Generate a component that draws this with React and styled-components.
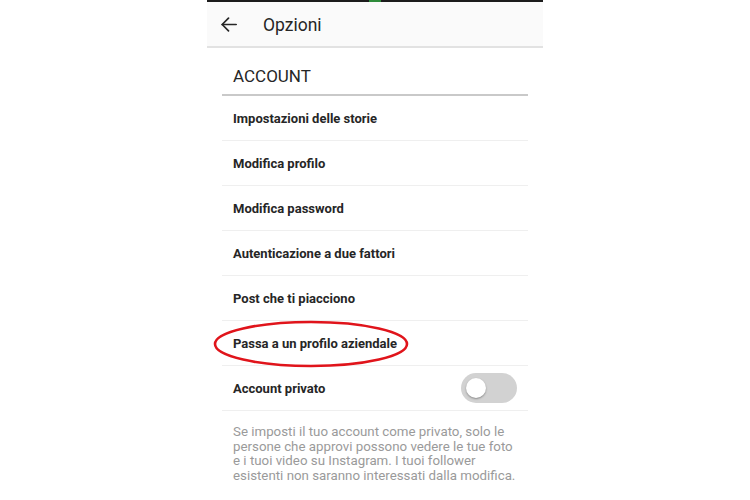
import React, { useState } from 'react';
import styled, { createGlobalStyle } from 'styled-components';

const GlobalStyle = createGlobalStyle`
  html, body {
    margin: 0;
    padding: 0;
    background: #ffffff;
    font-family: Roboto, "Noto Sans", "Liberation Sans", sans-serif;
  }
`;

const Page = styled.div`
  width: 750px;
  height: 500px;
  display: flex;
  justify-content: center;
  overflow: hidden;
  background: #ffffff;
`;

const Screen = styled.div`
  position: relative;
  width: 336px;
  display: flex;
  flex-direction: column;
  background: #ffffff;
`;

const StatusStrip = styled.div`
  height: 2px;
  background: #1c1c1c;
  display: flex;
  justify-content: center;
`;

const StatusMark = styled.div`
  width: 12px;
  height: 2px;
  background: #2e8b3a;
`;

const TopBar = styled.div`
  height: 44px;
  display: flex;
  align-items: center;
  padding: 0 14px;
  background: #fafafa;
  border-bottom: 2px solid #e2e2e2;
`;

const BackButton = styled.button`
  width: 16px;
  height: 24px;
  padding: 0;
  border: none;
  background: none;
  display: flex;
  align-items: center;
  justify-content: center;
  cursor: pointer;
`;

const Title = styled.div`
  font-size: 17.5px;
  color: #262626;
  margin-left: 26px;
  padding-top: 1px;
`;

const Content = styled.div`
  padding: 0 15px;
  display: flex;
  flex-direction: column;
`;

const SectionTitle = styled.div`
  height: 36px;
  display: flex;
  align-items: center;
  padding: 10px 11px 0;
  font-size: 17px;
  color: #262626;
  border-bottom: 2px solid #c9c9c9;
`;

const Row = styled.div`
  height: 44px;
  display: flex;
  align-items: center;
  justify-content: space-between;
  padding: 0 11px;
  border-bottom: 1px solid #efefef;
  font-size: 13px;
  font-weight: 700;
  color: #262626;
`;

const Switch = styled.button`
  width: 56px;
  height: 30px;
  padding: 0 5px;
  border: none;
  border-radius: 15px;
  background: ${p => (p.on ? '#3897f0' : '#d2d2d2')};
  display: flex;
  align-items: center;
  justify-content: ${p => (p.on ? 'flex-end' : 'flex-start')};
  cursor: pointer;
`;

const Knob = styled.span`
  width: 20px;
  height: 20px;
  border-radius: 50%;
  background: #ffffff;
  box-shadow: 0 1px 2px rgba(0, 0, 0, 0.35);
`;

const Note = styled.p`
  margin: 0;
  padding: 14px 0 0 11px;
  font-size: 13.3px;
  line-height: 14.6px;
  color: #9a9a9a;
  white-space: nowrap;
`;

const Highlight = styled.svg`
  position: absolute;
  left: 4px;
  top: 320px;
  pointer-events: none;
`;

const items = [
  'Impostazioni delle storie',
  'Modifica profilo',
  'Modifica password',
  'Autenticazione a due fattori',
  'Post che ti piacciono',
  'Passa a un profilo aziendale',
];

const App = () => {
  const [privateAccount, setPrivateAccount] = useState(false);

  return (
    <Page>
      <GlobalStyle />
      <Screen>
        <StatusStrip>
          <StatusMark />
        </StatusStrip>
        <TopBar>
          <BackButton aria-label="Indietro">
            <svg width="16" height="15" viewBox="0 0 16 15" fill="none" stroke="#262626" strokeWidth="1.7" strokeLinecap="round" strokeLinejoin="round">
              <path d="M15.2 7.5H1.2" />
              <path d="M7.5 1.2L1.2 7.5L7.5 13.8" />
            </svg>
          </BackButton>
          <Title>Opzioni</Title>
        </TopBar>
        <Content>
          <SectionTitle>ACCOUNT</SectionTitle>
          {items.map(label => (
            <Row key={label}>{label}</Row>
          ))}
          <Row>
            Account privato
            <Switch on={privateAccount ? 1 : 0} onClick={() => setPrivateAccount(!privateAccount)}>
              <Knob />
            </Switch>
          </Row>
          <Note>
            Se imposti il tuo account come privato, solo le<br />
            persone che approvi possono vedere le tue foto<br />
            e i tuoi video su Instagram. I tuoi follower<br />
            esistenti non saranno interessati dalla modifica.
          </Note>
        </Content>
        <Highlight width="200" height="50" viewBox="0 0 200 50">
          <ellipse cx="100" cy="24" rx="96" ry="22" fill="none" stroke="#e0141b" strokeWidth="2.6" />
        </Highlight>
      </Screen>
    </Page>
  );
};

export default App;
